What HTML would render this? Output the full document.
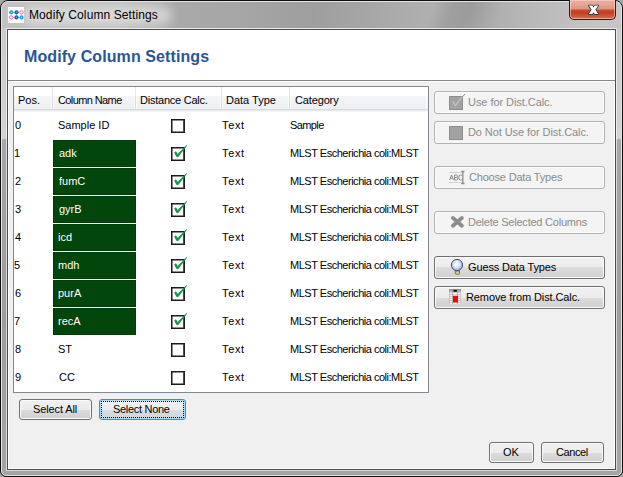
<!DOCTYPE html>
<html><head><meta charset="utf-8"><style>
*{margin:0;padding:0;box-sizing:border-box}
html,body{width:623px;height:477px;overflow:hidden}
body{position:relative;background:#a8a8a8;font-family:"Liberation Sans", sans-serif;color:#000}
.a{position:absolute}
.t{position:absolute;white-space:pre}
</style></head><body>
<div class="a" style="left:0;top:0;width:623px;height:477px;border-radius:8px 8px 6px 6px;overflow:hidden;border:1px solid #0e0e0e;background:linear-gradient(180deg,#c9c9c9 0,#cfcfcf 100px,#d4d4d4 137px,#a8a8a8 139px,#a2a2a2 200px,#9d9d9d 320px,#a6a6a6 477px)"><div class="a" style="left:1px;top:1px;width:619px;height:26px;background:linear-gradient(115deg,rgba(0,0,0,0) 392px,rgba(0,0,0,.08) 412px,rgba(0,0,0,.08) 426px,rgba(0,0,0,0) 456px),linear-gradient(90deg,#c2c2c2 0,#c0c0c0 120px,#b8b8b8 150px,#a9a9a9 176px,#a6a6a6 240px,#9e9e9e 310px,#aaaaaa 390px,#b0b0b0 430px,#a8a8a8 470px,#b6b6b6 520px,#c2c2c2 580px,#c6c6c6 619px)"></div><div class="a" style="left:0;top:0;width:621px;height:475px;border:1px solid #e4e4e4;border-radius:7px 7px 5px 5px"></div></div>
<div class="a" style="left:2px;top:2px;width:619px;height:26px;overflow:hidden"><div class="a" style="left:22px;top:5px;width:148px;height:17px;border-radius:9px;background:rgba(255,255,255,.42);filter:blur(5px)"></div></div>
<div class="a" style="left:6px;top:28px;width:611px;height:443px;border:1px solid rgba(255,255,255,.6);border-radius:1px"></div>
<div class="a" style="left:7px;top:29px;width:609px;height:441px;border:1px solid #4d4d4d;background:#f0f0f0"></div>
<div class="a" style="left:8px;top:30px;width:607px;height:50px;background:#fff"></div>
<div class="a" style="left:8px;top:80px;width:607px;height:1px;background:#868686"></div>
<div class="a" style="left:8px;top:81px;width:607px;height:388px;background:#f0f0f0;border:1px solid #fcfcfc"></div>
<svg class="a" style="left:8px;top:7px" width="16" height="16" viewBox="0 0 16 16">
<rect width="16" height="16" fill="#fff"/>
<path d="M5.2 5.3H6.4M10.5 5.3H11.6M8.5 7.4V8.3M5.2 10.4H6.4M10.5 10.4H11.6" stroke="#8cc4ea" stroke-width="0.9"/>
<circle cx="3.2" cy="5.3" r="2.1" fill="#17a2ea"/>
<circle cx="8.5" cy="5.3" r="2.1" fill="#1f5fa6"/>
<circle cx="13.5" cy="5.3" r="1.7" fill="#fff" stroke="#ee4ea2" stroke-width="0.9"/>
<circle cx="3.2" cy="10.4" r="1.7" fill="#fff" stroke="#ee4ea2" stroke-width="0.9"/>
<circle cx="8.5" cy="10.4" r="2.1" fill="#1f5fa6"/>
<circle cx="13.5" cy="10.4" r="2.1" fill="#17a2ea"/>
<path d="M3.2 4.6V6M2.5 5.3H3.9M13.5 9.7V11.1M12.8 10.4H14.2M8.5 4.6V6M8.5 9.7V11.1" stroke="#a8dcf8" stroke-width="0.6"/>
</svg>
<div class="a" style="left:569px;top:0;width:47px;height:20px;border:1px solid #3a1710;border-top:0;border-radius:0 0 5px 5px;background:linear-gradient(180deg,#e6a89a 0,#e8aa9c 3px,#df9280 9px,#c94a2e 10px,#c53e24 13px,#cf5f46 17px,#d77462 20px);box-shadow:inset 0 0 0 1px rgba(255,220,210,.55)"></div>
<svg class="a" style="left:586px;top:3px" width="15" height="14" viewBox="0 0 15 14">
<path d="M2.8 2.6H6.3L7.5 4.5L8.7 2.6H12.2L9.4 6.85L12.2 11.1H8.7L7.5 9.2L6.3 11.1H2.8L5.6 6.85Z" fill="#fff" stroke="#2c3444" stroke-width="1.5" stroke-linejoin="round" paint-order="stroke"/>
</svg>
<div class="a" style="left:13px;top:86px;width:416px;height:307px;border:1px solid #828790;background:#fff"></div>
<div class="a" style="left:14px;top:87px;width:414px;height:25px;background:linear-gradient(180deg,#fff 0,#fff 9px,#f4f5f7 9px,#eef0f3 22px,#d9dadc 22px,#d9dadc 23px,#e8e9ea 23px,#e8e9ea 24px,#f6f6f6 24px)"></div>
<div class="a" style="left:51px;top:96px;width:3px;height:13px;background:linear-gradient(90deg,#fbfbfc 0,#fbfbfc 1px,#dcdcdd 1px,#dcdcdd 2px,#fbfbfc 2px)"></div>
<div class="a" style="left:52px;top:87px;width:1px;height:9px;background:#e6e6e6"></div>
<div class="a" style="left:134px;top:96px;width:3px;height:13px;background:linear-gradient(90deg,#fbfbfc 0,#fbfbfc 1px,#dcdcdd 1px,#dcdcdd 2px,#fbfbfc 2px)"></div>
<div class="a" style="left:135px;top:87px;width:1px;height:9px;background:#e6e6e6"></div>
<div class="a" style="left:220px;top:96px;width:3px;height:13px;background:linear-gradient(90deg,#fbfbfc 0,#fbfbfc 1px,#dcdcdd 1px,#dcdcdd 2px,#fbfbfc 2px)"></div>
<div class="a" style="left:221px;top:87px;width:1px;height:9px;background:#e6e6e6"></div>
<div class="a" style="left:288px;top:96px;width:3px;height:13px;background:linear-gradient(90deg,#fbfbfc 0,#fbfbfc 1px,#dcdcdd 1px,#dcdcdd 2px,#fbfbfc 2px)"></div>
<div class="a" style="left:289px;top:87px;width:1px;height:9px;background:#e6e6e6"></div>
<div class="a" style="left:426px;top:96px;width:1px;height:13px;background:#fbfbfc"></div>
<svg class="a" style="left:171px;top:119px;overflow:visible" width="14" height="14" viewBox="0 0 14 14"><rect x="0.75" y="0.75" width="12.5" height="12.5" fill="#fff" stroke="#1c1c1c" stroke-width="1.5"/><path d="M12.6 1.2V13.2" stroke="#4a4646" stroke-width="1"/></svg>
<div class="a" style="left:53px;top:140px;width:83px;height:27px;background:#02460c;box-shadow:inset 0 0 0 1px #013c09"></div>
<svg class="a" style="left:171px;top:147px;overflow:visible" width="14" height="14" viewBox="0 0 14 14"><rect x="0.75" y="0.75" width="12.5" height="12.5" fill="#fff" stroke="#1c1c1c" stroke-width="1.5"/><path d="M12.6 1.2V13.2" stroke="#4a4646" stroke-width="1"/><path d="M4.6 5.9L6.4 8.8" stroke="#16994a" stroke-width="2.5" stroke-linecap="round"/><path d="M5.3 8.2L7.4 9.7L16.2 -1.5L15.6 -2.1Z" fill="#16994a"/></svg>
<div class="a" style="left:53px;top:168px;width:83px;height:27px;background:#02460c;box-shadow:inset 0 0 0 1px #013c09"></div>
<svg class="a" style="left:171px;top:175px;overflow:visible" width="14" height="14" viewBox="0 0 14 14"><rect x="0.75" y="0.75" width="12.5" height="12.5" fill="#fff" stroke="#1c1c1c" stroke-width="1.5"/><path d="M12.6 1.2V13.2" stroke="#4a4646" stroke-width="1"/><path d="M4.6 5.9L6.4 8.8" stroke="#16994a" stroke-width="2.5" stroke-linecap="round"/><path d="M5.3 8.2L7.4 9.7L16.2 -1.5L15.6 -2.1Z" fill="#16994a"/></svg>
<div class="a" style="left:53px;top:196px;width:83px;height:27px;background:#02460c;box-shadow:inset 0 0 0 1px #013c09"></div>
<svg class="a" style="left:171px;top:203px;overflow:visible" width="14" height="14" viewBox="0 0 14 14"><rect x="0.75" y="0.75" width="12.5" height="12.5" fill="#fff" stroke="#1c1c1c" stroke-width="1.5"/><path d="M12.6 1.2V13.2" stroke="#4a4646" stroke-width="1"/><path d="M4.6 5.9L6.4 8.8" stroke="#16994a" stroke-width="2.5" stroke-linecap="round"/><path d="M5.3 8.2L7.4 9.7L16.2 -1.5L15.6 -2.1Z" fill="#16994a"/></svg>
<div class="a" style="left:53px;top:224px;width:83px;height:27px;background:#02460c;box-shadow:inset 0 0 0 1px #013c09"></div>
<svg class="a" style="left:171px;top:231px;overflow:visible" width="14" height="14" viewBox="0 0 14 14"><rect x="0.75" y="0.75" width="12.5" height="12.5" fill="#fff" stroke="#1c1c1c" stroke-width="1.5"/><path d="M12.6 1.2V13.2" stroke="#4a4646" stroke-width="1"/><path d="M4.6 5.9L6.4 8.8" stroke="#16994a" stroke-width="2.5" stroke-linecap="round"/><path d="M5.3 8.2L7.4 9.7L16.2 -1.5L15.6 -2.1Z" fill="#16994a"/></svg>
<div class="a" style="left:53px;top:252px;width:83px;height:27px;background:#02460c;box-shadow:inset 0 0 0 1px #013c09"></div>
<svg class="a" style="left:171px;top:259px;overflow:visible" width="14" height="14" viewBox="0 0 14 14"><rect x="0.75" y="0.75" width="12.5" height="12.5" fill="#fff" stroke="#1c1c1c" stroke-width="1.5"/><path d="M12.6 1.2V13.2" stroke="#4a4646" stroke-width="1"/><path d="M4.6 5.9L6.4 8.8" stroke="#16994a" stroke-width="2.5" stroke-linecap="round"/><path d="M5.3 8.2L7.4 9.7L16.2 -1.5L15.6 -2.1Z" fill="#16994a"/></svg>
<div class="a" style="left:53px;top:280px;width:83px;height:27px;background:#02460c;box-shadow:inset 0 0 0 1px #013c09"></div>
<svg class="a" style="left:171px;top:287px;overflow:visible" width="14" height="14" viewBox="0 0 14 14"><rect x="0.75" y="0.75" width="12.5" height="12.5" fill="#fff" stroke="#1c1c1c" stroke-width="1.5"/><path d="M12.6 1.2V13.2" stroke="#4a4646" stroke-width="1"/><path d="M4.6 5.9L6.4 8.8" stroke="#16994a" stroke-width="2.5" stroke-linecap="round"/><path d="M5.3 8.2L7.4 9.7L16.2 -1.5L15.6 -2.1Z" fill="#16994a"/></svg>
<div class="a" style="left:53px;top:308px;width:83px;height:27px;background:#02460c;box-shadow:inset 0 0 0 1px #013c09"></div>
<svg class="a" style="left:171px;top:315px;overflow:visible" width="14" height="14" viewBox="0 0 14 14"><rect x="0.75" y="0.75" width="12.5" height="12.5" fill="#fff" stroke="#1c1c1c" stroke-width="1.5"/><path d="M12.6 1.2V13.2" stroke="#4a4646" stroke-width="1"/><path d="M4.6 5.9L6.4 8.8" stroke="#16994a" stroke-width="2.5" stroke-linecap="round"/><path d="M5.3 8.2L7.4 9.7L16.2 -1.5L15.6 -2.1Z" fill="#16994a"/></svg>
<svg class="a" style="left:171px;top:343px;overflow:visible" width="14" height="14" viewBox="0 0 14 14"><rect x="0.75" y="0.75" width="12.5" height="12.5" fill="#fff" stroke="#1c1c1c" stroke-width="1.5"/><path d="M12.6 1.2V13.2" stroke="#4a4646" stroke-width="1"/></svg>
<svg class="a" style="left:171px;top:371px;overflow:visible" width="14" height="14" viewBox="0 0 14 14"><rect x="0.75" y="0.75" width="12.5" height="12.5" fill="#fff" stroke="#1c1c1c" stroke-width="1.5"/><path d="M12.6 1.2V13.2" stroke="#4a4646" stroke-width="1"/></svg>
<div class="a" style="left:434px;top:91px;width:171px;height:23px;border:1px solid #adb2b5;border-radius:3px;background:#f4f4f4;box-shadow:inset 0 0 0 1px #fcfcfc"></div>
<svg class="a" style="left:449px;top:96px;overflow:visible" width="14" height="14" viewBox="0 0 14 14"><rect x="0.5" y="0.5" width="13" height="13" fill="#a2a2a2" stroke="#8d8d8d"/><path d="M3.9 5.5L6.3 9.7L13.5 0.5" stroke="#c4c4c4" stroke-width="1.2" fill="none"/><path d="M13.3 0.8L16 -1.8" stroke="#8a8a8a" stroke-width="1"/></svg>
<div class="a" style="left:434px;top:121px;width:171px;height:23px;border:1px solid #adb2b5;border-radius:3px;background:#f4f4f4;box-shadow:inset 0 0 0 1px #fcfcfc"></div>
<svg class="a" style="left:449px;top:126px" width="14" height="14" viewBox="0 0 14 14"><rect x="0.5" y="0.5" width="13" height="13" fill="#a2a2a2" stroke="#8d8d8d"/></svg>
<div class="a" style="left:434px;top:166px;width:171px;height:23px;border:1px solid #adb2b5;border-radius:3px;background:#f4f4f4;box-shadow:inset 0 0 0 1px #fcfcfc"></div>
<svg class="a" style="left:448px;top:170px" width="18" height="15" viewBox="0 0 18 15"><path d="M1 2.5H13.5M1 12.5H13.5" stroke="#d2d2d2" stroke-width="1"/><path d="M1.6 10L3.5 5L5.4 10M2.3 8.3H4.7M6.5 5V10H8.6Q9.8 10 9.8 8.7Q9.8 7.5 8.5 7.5H6.5M6.5 5H8.4Q9.5 5 9.5 6.2Q9.5 7.5 8.4 7.5M14 5.6Q13.4 5 12.5 5Q10.8 5 10.8 7.5Q10.8 10 12.5 10Q13.4 10 14 9.4" stroke="#8a8a8a" stroke-width="1" fill="none"/><path d="M14.8 1.6V13.4" stroke="#8a8a8a" stroke-width="1.3"/><path d="M13.2 1.5H16.5M13.2 13.5H16.5" stroke="#8a8a8a" stroke-width="1.4"/></svg>
<div class="a" style="left:434px;top:211px;width:171px;height:23px;border:1px solid #adb2b5;border-radius:3px;background:#f4f4f4;box-shadow:inset 0 0 0 1px #fcfcfc"></div>
<svg class="a" style="left:450px;top:215px" width="15" height="15" viewBox="0 0 15 15"><path d="M2.9 2.9L11.9 10.8M11.9 2.9L2.9 10.8" stroke="#8c8c8c" stroke-width="3.8" stroke-linecap="round"/></svg>
<div class="a" style="left:434px;top:256px;width:171px;height:23px;border:1px solid #707070;border-radius:3px;background:linear-gradient(180deg,#f2f2f2 0,#ebebeb 50%,#dddddd 50%,#cfcfcf 100%);box-shadow:inset 0 0 0 1px #fbfbfb"></div>
<svg class="a" style="left:450px;top:258px" width="14" height="18" viewBox="0 0 14 18"><defs><radialGradient id="bg" cx="0.45" cy="0.42" r="0.62"><stop offset="0" stop-color="#ffffff"/><stop offset="0.5" stop-color="#d6e0f0"/><stop offset="1" stop-color="#8fa5cf"/></radialGradient></defs><rect x="5.3" y="11.8" width="4.2" height="4.4" rx="0.8" fill="#d9d39a" stroke="#6f6a45" stroke-width="0.9"/><path d="M5.3 13.6H9.5" stroke="#8a8560" stroke-width="0.7"/><circle cx="7" cy="7" r="5.6" fill="url(#bg)" stroke="#3d5088" stroke-width="1"/><path d="M5.6 8.8V6.2Q5.6 5 7 5H8.4" stroke="#fff" stroke-width="0.9" fill="none"/></svg>
<div class="a" style="left:434px;top:286px;width:171px;height:23px;border:1px solid #707070;border-radius:3px;background:linear-gradient(180deg,#f2f2f2 0,#ebebeb 50%,#dddddd 50%,#cfcfcf 100%);box-shadow:inset 0 0 0 1px #fbfbfb"></div>
<svg class="a" style="left:449px;top:289px" width="12" height="15" viewBox="0 0 12 15"><rect x="0" y="0" width="12" height="15" fill="#f2f2f2"/><path d="M0 3.5H12M0 5.5H12M0 7.5H12M0 9.5H12M0 11.5H12M0 13.5H12" stroke="#d2d2d2" stroke-width="1"/><path d="M0.5 0V15M11.5 0V15" stroke="#c4c4c4" stroke-width="1"/><path d="M3.6 0V15M8.6 0V15" stroke="#9a9a9a" stroke-width="0.8"/><rect x="0" y="0" width="12" height="2.6" fill="#9c9c9c"/><rect x="4.6" y="0.8" width="3.2" height="2" fill="#000"/><rect x="4" y="6.8" width="5" height="6.6" fill="#ff0000"/></svg>
<div class="a" style="left:19px;top:399px;width:73px;height:21px;border:1px solid #707070;border-radius:3px;background:linear-gradient(180deg,#f2f2f2 0,#ebebeb 50%,#dddddd 50%,#cfcfcf 100%);box-shadow:inset 0 0 0 1px #fbfbfb"></div>

<div class="a" style="left:99px;top:399px;width:87px;height:21px;border:1px solid #3d8cc4;border-radius:3px;background:linear-gradient(180deg,#f1f3f5 0,#e9ecef 50%,#d9dfe4 50%,#cdd5db 100%);box-shadow:inset 0 0 0 1px #a6dcf4"></div>
<svg class="a" style="left:101px;top:401px" width="83" height="17"><rect x="0.5" y="0.5" width="82" height="16" fill="none" stroke="#000" stroke-dasharray="1 1" stroke-dashoffset="0.5" shape-rendering="crispEdges"/></svg>

<div class="a" style="left:489px;top:442px;width:45px;height:21px;border:1px solid #707070;border-radius:3px;background:linear-gradient(180deg,#f2f2f2 0,#ebebeb 50%,#dddddd 50%,#cfcfcf 100%);box-shadow:inset 0 0 0 1px #fbfbfb"></div>

<div class="a" style="left:541px;top:442px;width:63px;height:21px;border:1px solid #707070;border-radius:3px;background:linear-gradient(180deg,#f2f2f2 0,#ebebeb 50%,#dddddd 50%,#cfcfcf 100%);box-shadow:inset 0 0 0 1px #fbfbfb"></div>

<div class="t" id="tb" style="left:29.00px;top:9px;font-size:12px;line-height:12px;color:#000;letter-spacing:0.095px">Modify Column Settings</div>
<div class="t" id="title" style="left:24.00px;top:49px;font-size:16px;line-height:16px;color:#2b5695;font-weight:700;letter-spacing:0.095px">Modify Column Settings</div>
<div class="t" id="h0" style="left:18.00px;top:95px;font-size:11px;line-height:11px;color:#000">Pos.</div>
<div class="t" id="h1" style="left:58.00px;top:95px;font-size:11px;line-height:11px;color:#000;letter-spacing:-0.600px">Column Name</div>
<div class="t" id="h2" style="left:140.00px;top:95px;font-size:11px;line-height:11px;color:#000;letter-spacing:-0.231px">Distance Calc.</div>
<div class="t" id="h3" style="left:226.00px;top:95px;font-size:11px;line-height:11px;color:#000">Data Type</div>
<div class="t" id="h4" style="left:295.00px;top:95px;font-size:11px;line-height:11px;color:#000;letter-spacing:-0.143px">Category</div>
<div class="t" id="p0" style="left:15.00px;top:120px;font-size:11px;line-height:11px;color:#000">0</div>
<div class="t" id="n0" style="left:58.00px;top:120px;font-size:11px;line-height:11px;color:#000">Sample ID</div>
<div class="t" id="d0" style="left:222.00px;top:120px;font-size:11px;line-height:11px;color:#000;letter-spacing:0.667px">Text</div>
<div class="t" id="c0" style="left:290.00px;top:120px;font-size:11px;line-height:11px;color:#000;letter-spacing:-0.600px">Sample</div>
<div class="t" id="p1" style="left:14.00px;top:148px;font-size:11px;line-height:11px;color:#000">1</div>
<div class="t" id="n1" style="left:59.00px;top:148px;font-size:11px;line-height:11px;color:#fff">adk</div>
<div class="t" id="d1" style="left:222.00px;top:148px;font-size:11px;line-height:11px;color:#000;letter-spacing:0.667px">Text</div>
<div class="t" id="c1" style="left:290.00px;top:148px;font-size:11px;line-height:11px;color:#000;letter-spacing:-0.480px">MLST Escherichia coli:MLST</div>
<div class="t" id="p2" style="left:15.00px;top:176px;font-size:11px;line-height:11px;color:#000">2</div>
<div class="t" id="n2" style="left:59.00px;top:176px;font-size:11px;line-height:11px;color:#fff">fumC</div>
<div class="t" id="d2" style="left:222.00px;top:176px;font-size:11px;line-height:11px;color:#000;letter-spacing:0.667px">Text</div>
<div class="t" id="c2" style="left:290.00px;top:176px;font-size:11px;line-height:11px;color:#000;letter-spacing:-0.480px">MLST Escherichia coli:MLST</div>
<div class="t" id="p3" style="left:15.00px;top:204px;font-size:11px;line-height:11px;color:#000">3</div>
<div class="t" id="n3" style="left:59.00px;top:204px;font-size:11px;line-height:11px;color:#fff">gyrB</div>
<div class="t" id="d3" style="left:222.00px;top:204px;font-size:11px;line-height:11px;color:#000;letter-spacing:0.667px">Text</div>
<div class="t" id="c3" style="left:290.00px;top:204px;font-size:11px;line-height:11px;color:#000;letter-spacing:-0.480px">MLST Escherichia coli:MLST</div>
<div class="t" id="p4" style="left:15.00px;top:232px;font-size:11px;line-height:11px;color:#000">4</div>
<div class="t" id="n4" style="left:58.00px;top:232px;font-size:11px;line-height:11px;color:#fff">icd</div>
<div class="t" id="d4" style="left:222.00px;top:232px;font-size:11px;line-height:11px;color:#000;letter-spacing:0.667px">Text</div>
<div class="t" id="c4" style="left:290.00px;top:232px;font-size:11px;line-height:11px;color:#000;letter-spacing:-0.480px">MLST Escherichia coli:MLST</div>
<div class="t" id="p5" style="left:14.00px;top:260px;font-size:11px;line-height:11px;color:#000">5</div>
<div class="t" id="n5" style="left:58.00px;top:260px;font-size:11px;line-height:11px;color:#fff">mdh</div>
<div class="t" id="d5" style="left:222.00px;top:260px;font-size:11px;line-height:11px;color:#000;letter-spacing:0.667px">Text</div>
<div class="t" id="c5" style="left:290.00px;top:260px;font-size:11px;line-height:11px;color:#000;letter-spacing:-0.480px">MLST Escherichia coli:MLST</div>
<div class="t" id="p6" style="left:15.00px;top:288px;font-size:11px;line-height:11px;color:#000">6</div>
<div class="t" id="n6" style="left:58.00px;top:288px;font-size:11px;line-height:11px;color:#fff">purA</div>
<div class="t" id="d6" style="left:222.00px;top:288px;font-size:11px;line-height:11px;color:#000;letter-spacing:0.667px">Text</div>
<div class="t" id="c6" style="left:290.00px;top:288px;font-size:11px;line-height:11px;color:#000;letter-spacing:-0.480px">MLST Escherichia coli:MLST</div>
<div class="t" id="p7" style="left:14.00px;top:316px;font-size:11px;line-height:11px;color:#000">7</div>
<div class="t" id="n7" style="left:58.00px;top:316px;font-size:11px;line-height:11px;color:#fff">recA</div>
<div class="t" id="d7" style="left:222.00px;top:316px;font-size:11px;line-height:11px;color:#000;letter-spacing:0.667px">Text</div>
<div class="t" id="c7" style="left:290.00px;top:316px;font-size:11px;line-height:11px;color:#000;letter-spacing:-0.480px">MLST Escherichia coli:MLST</div>
<div class="t" id="p8" style="left:15.00px;top:344px;font-size:11px;line-height:11px;color:#000">8</div>
<div class="t" id="n8" style="left:58.00px;top:344px;font-size:11px;line-height:11px;color:#000">ST</div>
<div class="t" id="d8" style="left:222.00px;top:344px;font-size:11px;line-height:11px;color:#000;letter-spacing:0.667px">Text</div>
<div class="t" id="c8" style="left:290.00px;top:344px;font-size:11px;line-height:11px;color:#000;letter-spacing:-0.480px">MLST Escherichia coli:MLST</div>
<div class="t" id="p9" style="left:15.00px;top:372px;font-size:11px;line-height:11px;color:#000">9</div>
<div class="t" id="n9" style="left:59.00px;top:372px;font-size:11px;line-height:11px;color:#000">CC</div>
<div class="t" id="d9" style="left:222.00px;top:372px;font-size:11px;line-height:11px;color:#000;letter-spacing:0.667px">Text</div>
<div class="t" id="c9" style="left:290.00px;top:372px;font-size:11px;line-height:11px;color:#000;letter-spacing:-0.480px">MLST Escherichia coli:MLST</div>
<div class="t" id="b1" style="left:468.00px;top:97px;font-size:11px;line-height:11px;color:#8b8b8b;letter-spacing:-0.059px">Use for Dist.Calc.</div>
<div class="t" id="b2" style="left:468.00px;top:127px;font-size:11px;line-height:11px;color:#8b8b8b;letter-spacing:-0.083px">Do Not Use for Dist.Calc.</div>
<div class="t" id="b3" style="left:469.00px;top:172px;font-size:11px;line-height:11px;color:#8b8b8b;letter-spacing:-0.188px">Choose Data Types</div>
<div class="t" id="b4" style="left:468.00px;top:217px;font-size:11px;line-height:11px;color:#8b8b8b;letter-spacing:-0.227px">Delete Selected Columns</div>
<div class="t" id="b5" style="left:468.00px;top:262px;font-size:11px;line-height:11px;color:#000;letter-spacing:-0.133px">Guess Data Types</div>
<div class="t" id="b6" style="left:466.00px;top:292px;font-size:11px;line-height:11px;color:#000;letter-spacing:-0.095px">Remove from Dist.Calc.</div>
<div class="t" id="b7" style="left:33.00px;top:404px;font-size:11px;line-height:11px;color:#000;letter-spacing:-0.111px">Select All</div>
<div class="t" id="b8" style="left:113.00px;top:404px;font-size:11px;line-height:11px;color:#000;letter-spacing:-0.300px">Select None</div>
<div class="t" id="b9" style="left:503.00px;top:447px;font-size:11px;line-height:11px;color:#000">OK</div>
<div class="t" id="b10" style="left:556.00px;top:447px;font-size:11px;line-height:11px;color:#000;letter-spacing:-0.400px">Cancel</div>
</body></html>
